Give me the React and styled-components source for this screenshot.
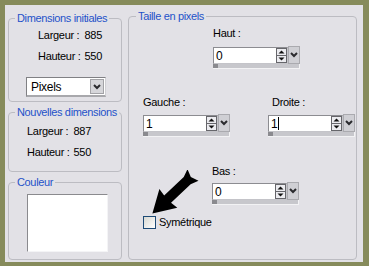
import React from "react";
import styled, { createGlobalStyle } from "styled-components";

const Global = createGlobalStyle`
  html, body { margin: 0; padding: 0; background: #e2e1e6; }
  * { box-sizing: border-box; }
`;

const Frame = styled.div`
  width: 369px;
  height: 266px;
  background: #e2e1e6;
  border-style: solid;
  border-color: #868b5b;
  border-width: 5px 6px 4px 5px;
  padding: 5px 6px 2px 3px;
  display: flex;
  gap: 6px;
  font-family: "Liberation Sans", Arial, sans-serif;
  font-size: 11px;
  letter-spacing: -0.3px;
  color: #000;
`;

const LeftCol = styled.div`
  width: 114px;
  margin-top: 2px;
  display: flex;
  flex-direction: column;
  gap: 4px;
`;

const Group = styled.fieldset`
  margin: 0;
  padding: 0;
  min-width: 0;
  width: ${(p) => p.$w}px;
  height: ${(p) => p.$h}px;
  border: 1px solid #bcbcc2;
  border-radius: 4px;
  display: flex;
  flex-direction: column;
  align-items: flex-start;
`;

const Title = styled.legend`
  margin-left: ${(p) => p.$ml || 6}px;
  padding: 0 2px;
  line-height: 13px;
  color: #1f52c9;
  font-size: 11px;
  white-space: nowrap;
  letter-spacing: -0.35px;
`;

const InfoGrid = styled.div`
  display: grid;
  grid-template-columns: auto auto;
  column-gap: 4px;
  row-gap: 8px;
  line-height: 13px;
  margin-top: ${(p) => p.$mt}px;
  margin-left: ${(p) => p.$ml}px;
`;

const Select = styled.div`
  margin-top: 14px;
  margin-left: 17px;
  width: 80px;
  height: 20px;
  background: #fff;
  border: 1px solid;
  border-color: #808084 #cfcfd3 #a8a8ac #808084;
  border-bottom-width: 2px;
  display: flex;
  align-items: center;
  padding: 0 1px 0 4px;
`;

const SelectText = styled.span`
  flex: 1;
  font-size: 12px;
`;

const SelectBtn = styled.div`
  width: 14px;
  height: 15px;
  background: #d6d6da;
  border: 1px solid #a2a2a6;
  display: flex;
  align-items: center;
  justify-content: center;
`;

const Swatch = styled.div`
  margin-top: 5px;
  margin-left: 18px;
  width: 81px;
  height: 58px;
  background: #fff;
  border: 1px solid;
  border-color: #8a8a8e #f4f4f6 #f4f4f6 #8a8a8e;
`;

const RightBody = styled.div`
  padding: 4px 0 0 14px;
  display: flex;
  flex-direction: column;
  width: 100%;
`;

const Row = styled.div`
  display: flex;
  margin-left: ${(p) => p.$ml || 0}px;
  margin-top: ${(p) => p.$mt || 0}px;
  position: relative;
`;

const Block = styled.div`
  display: flex;
  flex-direction: column;
  gap: ${(p) => p.$gap}px;
  margin-left: ${(p) => p.$ml || 0}px;
`;

const Label = styled.div`
  line-height: 13px;
  margin-left: ${(p) => p.$ml || 0}px;
`;

const Spin = styled.div`
  display: flex;
  flex-direction: column;
  width: 87px;
`;

const SpinTop = styled.div`
  display: flex;
  align-items: flex-end;
`;

const Field = styled.div`
  width: 75px;
  height: 17px;
  background: #fff;
  border: 1px solid;
  border-color: #8c8c91 #c4c4c9 #c4c4c9 #8c8c91;
  display: flex;
  align-items: center;
  padding-left: 2px;
`;

const FieldText = styled.span`
  flex: 1;
  font-size: 12px;
  display: flex;
  align-items: center;
`;

const Caret = styled.span`
  display: inline-block;
  width: 1px;
  height: 13px;
  background: #000;
  margin-left: 1px;
`;

const Arrows = styled.div`
  width: 11px;
  height: 15px;
  display: flex;
  flex-direction: column;
`;

const ArrowBtn = styled.div`
  flex: 1;
  border: 1px solid #66666b;
  background: #ececf0;
  display: flex;
  align-items: center;
  justify-content: center;
  & + & { border-top: none; }
`;

const Drop = styled.div`
  width: 12px;
  height: 18px;
  background: #cfcfd4;
  border: 1px solid #aaaaaf;
  display: flex;
  align-items: center;
  justify-content: center;
`;

const Strip = styled.div`
  height: 5px;
  background: #c7c7cc;
  border-bottom: 1px solid #f2f2f4;
  border-right: 1px solid #f2f2f4;
  display: flex;
`;

const Thumb = styled.div`
  width: 5px;
  background: #8a8a8f;
`;

const Check = styled.div`
  width: 13px;
  height: 13px;
  border: 1px solid #1d4a76;
  background: linear-gradient(135deg, #d8d8d2, #ffffff);
`;

const CheckLabel = styled.span`
  margin-left: 3px;
  line-height: 13px;
`;

const Pointer = styled.svg`
  position: absolute;
  left: 2px;
  top: -46px;
  width: 56px;
  height: 50px;
  pointer-events: none;
`;

const Chevron = () => (
  <svg width="8" height="6" viewBox="0 0 8 6">
    <polyline points="1,1 4,4 7,1" fill="none" stroke="#2a2a2e" strokeWidth="2" />
  </svg>
);

const Tri = ({ up }) => (
  <svg width="7" height="4" viewBox="0 0 7 4">
    <polygon points={up ? "0.5,3.5 3.5,0.5 6.5,3.5" : "0.5,0.5 6.5,0.5 3.5,3.5"} fill="#111" />
  </svg>
);

const SpinInput = ({ value, caret }) => (
  <Spin>
    <SpinTop>
      <Field>
        <FieldText>
          {value}
          {caret && <Caret />}
        </FieldText>
        <Arrows>
          <ArrowBtn>
            <Tri up />
          </ArrowBtn>
          <ArrowBtn>
            <Tri />
          </ArrowBtn>
        </Arrows>
      </Field>
      <Drop>
        <Chevron />
      </Drop>
    </SpinTop>
    <Strip>
      <Thumb />
    </Strip>
  </Spin>
);

export default function App() {
  return (
    <>
      <Global />
      <Frame>
        <LeftCol>
          <Group $w={114} $h={90}>
            <Title>Dimensions initiales</Title>
            <InfoGrid $mt={4} $ml={29}>
              <span>Largeur :</span>
              <span>885</span>
              <span>Hauteur :</span>
              <span>550</span>
            </InfoGrid>
            <Select>
              <SelectText>Pixels</SelectText>
              <SelectBtn>
                <Chevron />
              </SelectBtn>
            </Select>
          </Group>
          <Group $w={114} $h={66}>
            <Title>Nouvelles dimensions</Title>
            <InfoGrid $mt={6} $ml={18}>
              <span>Largeur :</span>
              <span>887</span>
              <span>Hauteur :</span>
              <span>550</span>
            </InfoGrid>
          </Group>
          <Group $w={114} $h={84}>
            <Title>Couleur</Title>
            <Swatch />
          </Group>
        </LeftCol>
        <Group $w={229} $h={250}>
          <Title $ml={7}>Taille en pixels</Title>
          <RightBody>
            <Row $ml={70}>
              <Block $gap={6}>
                <Label>Haut :</Label>
                <SpinInput value="0" />
              </Block>
            </Row>
            <Row $mt={27}>
              <Block $gap={5}>
                <Label>Gauche :</Label>
                <SpinInput value="1" />
              </Block>
              <Block $gap={5} $ml={38}>
                <Label $ml={4}>Droite :</Label>
                <SpinInput value="1" caret />
              </Block>
            </Row>
            <Row $ml={69} $mt={28}>
              <Block $gap={4}>
                <Label>Bas :</Label>
                <SpinInput value="0" />
              </Block>
            </Row>
            <Row $mt={11}>
              <Check />
              <CheckLabel>Symétrique</CheckLabel>
              <Pointer viewBox="0 0 56 50">
                <g transform="translate(48,5) rotate(136.5)">
                  <polygon
                    points="0,-8 8,-5 35,-5 34,-13 56,0 34,13 35,5 8,5 0,8 3,0"
                    fill="#000"
                  />
                </g>
              </Pointer>
            </Row>
          </RightBody>
        </Group>
      </Frame>
    </>
  );
}
